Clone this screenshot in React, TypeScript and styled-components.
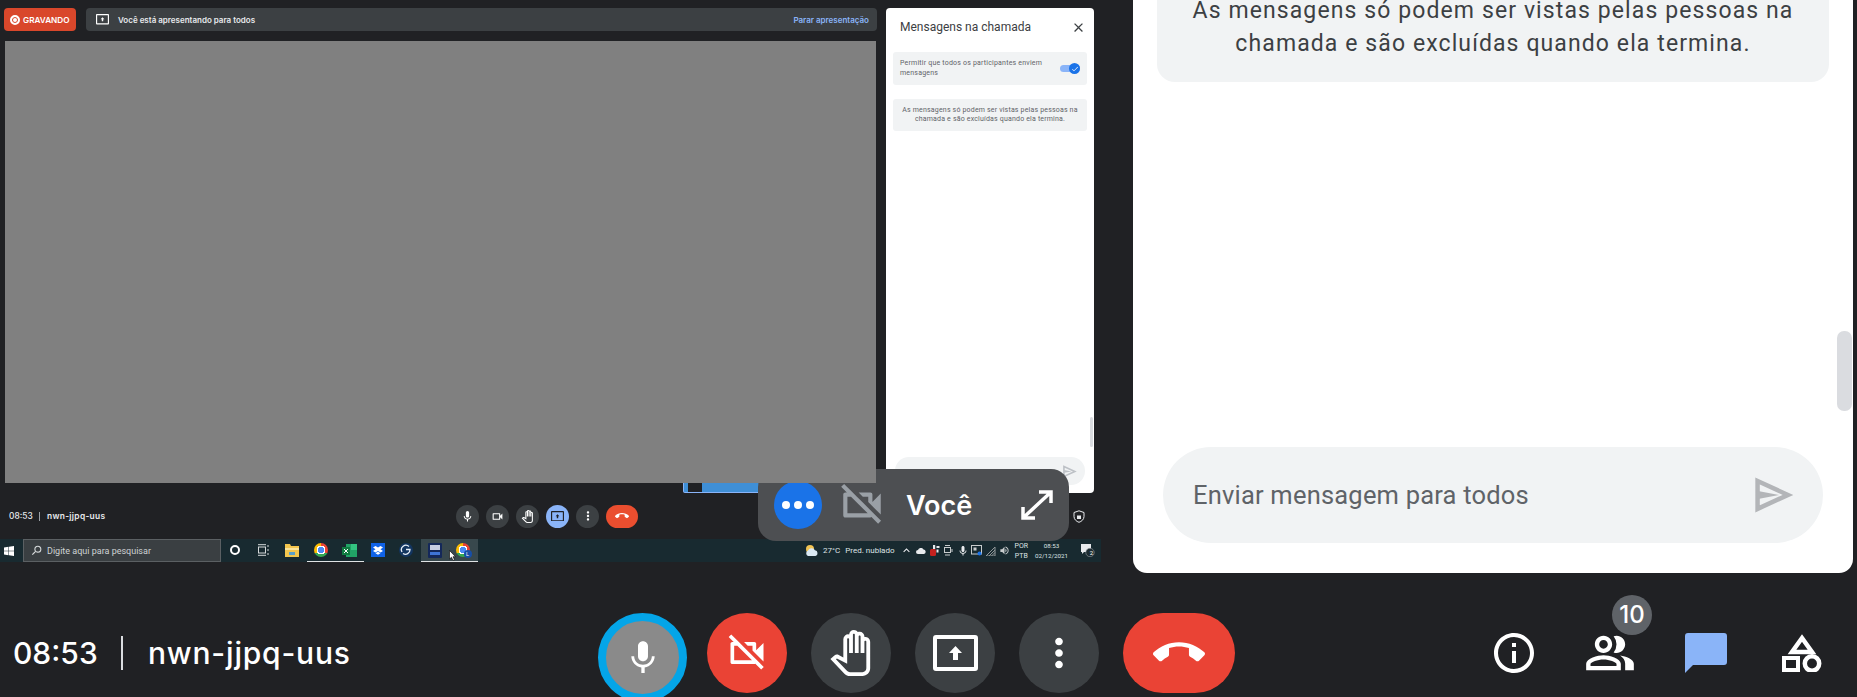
import styled, { createGlobalStyle } from "styled-components"
import {
    MdCallEnd,
    MdCheck,
    MdClose,
    MdInfoOutline,
    MdKeyboardArrowUp,
    MdMic,
    MdMoreVert,
    MdOutlinePanTool,
    MdOutlinePeopleAlt,
    MdOutlineVideocam,
    MdOutlineVideocamOff,
    MdSearch,
    MdVolumeUp,
} from "react-icons/md"

const GlobalStyle = createGlobalStyle`
    html, body {
        margin: 0;
        padding: 0;
        background: #202124;
    }
    * {
        box-sizing: border-box;
    }
`

const PresentIcon = ({ size, color }: { size: number; color: string }) => (
    <svg width={size} height={size * 0.8} viewBox="0 0 45 36">
        <rect x="2" y="2" width="41" height="32" rx="1" fill="none" stroke={color} strokeWidth="4" />
        <path d="M22.5 11 L29 18 H25 V25 H20 V18 H16 Z" fill={color} />
    </svg>
)

const SendIcon = ({ size, color }: { size: number; color: string }) => (
    <svg width={size} height={size * 0.92} viewBox="0 0 39 36">
        <path d="M2.5 4 L33 18 L2.5 32 Z" fill="none" stroke={color} strokeWidth="4.5" />
        <path d="M3 14 L24 18 L3 22 Z" fill={color} />
    </svg>
)

const ShapesIcon = () => (
    <svg width="40" height="38" viewBox="0 0 40 38">
        <path d="M20 4 L30 18 H10 Z" fill="none" stroke="#fff" strokeWidth="4.5" />
        <rect x="2" y="24" width="14" height="12" fill="none" stroke="#fff" strokeWidth="4" />
        <circle cx="30" cy="29.5" r="7.2" fill="none" stroke="#fff" strokeWidth="4.5" />
    </svg>
)

const ChatIcon = () => (
    <svg width="42" height="40" viewBox="0 0 42 40">
        <path d="M3 0 H39 a3 3 0 0 1 3 3 V29 a3 3 0 0 1 -3 3 H8 L0 40 V3 a3 3 0 0 1 3 -3 Z" fill="#8ab4f8" />
    </svg>
)

const ExpandIcon = () => (
    <svg width="32" height="30" viewBox="0 0 32 30">
        <path
            d="M18 2 H30 V13 M30 2 L2 28 M2 17 V28 H14"
            fill="none"
            stroke="#fff"
            strokeWidth="3.5"
        />
    </svg>
)

const WindowsIcon = () => (
    <svg width="10" height="10" viewBox="0 0 10 10">
        <path d="M0 1.4 L4.5 .8 V4.7 H0 Z M5 .7 L10 0 V4.7 H5 Z M0 5.2 H4.5 V9.2 L0 8.6 Z M5 5.2 H10 V10 L5 9.3 Z" fill="#fff" />
    </svg>
)

const TaskViewIcon = () => (
    <svg width="11" height="12" viewBox="0 0 11 12">
        <rect x=".5" y="3" width="7" height="6" fill="none" stroke="#d5d9da" />
        <path d="M0 .7 H8 M0 11.3 H8 M10 1 V3 M10 5 V7 M10 9 V11" stroke="#d5d9da" />
    </svg>
)

const FolderIcon = () => (
    <svg width="14" height="13" viewBox="0 0 14 13">
        <path d="M0 0 H5 L6 2 H14 V13 H0 Z" fill="#f3c64e" />
        <rect x="0" y="4" width="14" height="2" fill="#fbe49a" />
        <rect x="4" y="8" width="6" height="3" fill="#5ca0c8" />
    </svg>
)

const ExcelIcon = () => (
    <svg width="15" height="13" viewBox="0 0 15 13">
        <rect x="4" y="0" width="11" height="13" fill="#21a366" />
        <rect x="9" y="0" width="6" height="6" fill="#33c481" />
        <rect x="0" y="3" width="8" height="8" fill="#107c41" />
        <path d="M2 5 L6 9 M6 5 L2 9" stroke="#fff" strokeWidth="1" />
    </svg>
)

const DropboxIcon = () => (
    <svg width="14" height="14" viewBox="0 0 14 14">
        <rect width="14" height="14" fill="#0f62e6" />
        <path d="M4.5 3 L7 4.6 L9.5 3 L12 4.6 L9.5 6.3 L12 8 L9.5 9.5 L7 8 L4.5 9.5 L2 8 L4.5 6.3 L2 4.6 Z M4.5 10.2 L7 8.7 L9.5 10.2 L7 11.8 Z" fill="#fff" />
    </svg>
)

const SyncIcon = () => (
    <svg width="14" height="14" viewBox="0 0 14 14">
        <circle cx="7" cy="7" r="7" fill="#12355f" />
        <path d="M10 3.5 A4.5 4.5 0 0 0 3 9 M4 10.5 A4.5 4.5 0 0 0 11 6.5 H7" fill="none" stroke="#e6edf5" strokeWidth="1.3" />
    </svg>
)

const DtvIcon = () => (
    <svg width="14" height="15" viewBox="0 0 14 15">
        <rect width="14" height="15" rx="1" fill="#14285a" />
        <rect x="2" y="2" width="10" height="5" fill="#c6cde2" />
        <rect x="2" y="9" width="10" height="3" fill="#3f74d6" />
    </svg>
)

const CloudIcon = () => (
    <svg width="13" height="11" viewBox="0 0 13 11">
        <circle cx="5" cy="4" r="4" fill="#f2c453" />
        <path d="M3 11 a3 3 0 0 1 0 -5.5 a4 4 0 0 1 7 -.3 a3 3 0 0 1 .5 5.8 Z" fill="#dbe9f3" />
    </svg>
)

const ShieldIcon = () => (
    <svg width="12" height="13" viewBox="0 0 12 13">
        <path d="M6 .8 L11 2.5 V6.5 C11 9.5 8.5 11.5 6 12.3 C3.5 11.5 1 9.5 1 6.5 V2.5 Z" fill="none" stroke="#e8eaed" />
        <rect x="4" y="5.5" width="4" height="3.5" fill="#e8eaed" />
    </svg>
)

const CursorIcon = () => (
    <svg width="7" height="11" viewBox="0 0 7 11">
        <path d="M.5 .5 V9 L2.5 7.2 L4 10.5 L5.5 9.8 L4 6.7 H6.5 Z" fill="#fff" stroke="#000" strokeWidth=".6" />
    </svg>
)

const TrayCloud = () => (
    <svg width="10" height="6" viewBox="0 0 10 6">
        <path d="M2 6 a2 2 0 0 1 0 -4 a3 3 0 0 1 5.5 -.5 a2.3 2.3 0 0 1 .5 4.5 Z" fill="#e8eaed" />
    </svg>
)

const TrayApps = () => (
    <svg width="10" height="11" viewBox="0 0 10 11">
        <rect x="3" y="0" width="2.2" height="4" fill="#e8eaed" />
        <rect x="6.5" y="1" width="3" height="2" fill="#e8eaed" />
        <rect x="0" y="4" width="6" height="7" rx="1.5" fill="#c5221f" />
        <rect x="6.5" y="4.5" width="2" height="3" fill="#e8eaed" />
    </svg>
)

const TrayMeet = () => (
    <svg width="9" height="11" viewBox="0 0 9 11">
        <rect x=".5" y="2.5" width="6" height="5" fill="none" stroke="#c8cccd" />
        <path d="M1 .5 H6 M1 10 H6 M8 4 V7" stroke="#c8cccd" />
    </svg>
)

const TrayScreen = () => (
    <svg width="11" height="11" viewBox="0 0 11 11">
        <rect x=".5" y=".5" width="10" height="8.5" fill="none" stroke="#c8cccd" />
        <rect x="2.5" y="2.5" width="3" height="3" fill="#c8cccd" />
        <circle cx="8.5" cy="8.5" r="2" fill="#1a73e8" />
    </svg>
)

const TrayWifi = () => (
    <svg width="10" height="10" viewBox="0 0 10 10">
        <path d="M0 10 L9 1 V10 Z" fill="none" stroke="#8f9597" />
        <path d="M3 10 L9 4 M5.5 10 L9 6.5" stroke="#8f9597" />
    </svg>
)

const NotifIcon = () => (
    <svg width="14" height="13" viewBox="0 0 14 13">
        <path d="M0 0 H10 V8 H3 L1 10 V8 H0 Z" fill="#e8eaed" />
        <circle cx="9" cy="8.5" r="4.2" fill="#1d2b30" stroke="#9aa0a6" strokeWidth=".6" />
    </svg>
)

function App() {
    return (
        <>
            <GlobalStyle />
            <Page>
                <Main>
                    <ShareArea>
                        <SharedTop>
                            <Stage>
                                <InfoRow>
                                    <RecordPill>
                                        <RecordDot />
                                        GRAVANDO
                                    </RecordPill>
                                    <PresentBar>
                                        <PresentIcon size={13} color="#fff" />
                                        <PresentText>Você está apresentando para todos</PresentText>
                                        <StopLink>Parar apresentação</StopLink>
                                    </PresentBar>
                                </InfoRow>
                                <SharedScreen />
                                <Thumb>
                                    <ThumbDark />
                                </Thumb>
                            </Stage>
                            <MiniChat>
                                <MiniHeader>
                                    <MiniTitle>Mensagens na chamada</MiniTitle>
                                    <MdClose size={15} color="#3c4043" />
                                </MiniHeader>
                                <MiniRow>
                                    <MiniRowText>Permitir que todos os participantes enviem mensagens</MiniRowText>
                                    <Toggle>
                                        <ToggleKnob>
                                            <MdCheck size={8} color="#fff" />
                                        </ToggleKnob>
                                    </Toggle>
                                </MiniRow>
                                <MiniNotice>
                                    As mensagens só podem ser vistas pelas pessoas na chamada e são excluídas quando ela termina.
                                </MiniNotice>
                                <MiniInput>
                                    <MiniHint>Enviar mensagem</MiniHint>
                                    <SendIcon size={14} color="#bdc1c6" />
                                </MiniInput>
                                <MiniScroll />
                            </MiniChat>
                        </SharedTop>

                        <MiniControls>
                            <MiniClock>08:53</MiniClock>
                            <MiniDivider />
                            <MiniCode>nwn-jjpq-uus</MiniCode>
                            <MiniButtons>
                                <MiniButton>
                                    <MdMic size={13} color="#fff" />
                                </MiniButton>
                                <MiniButton>
                                    <MdOutlineVideocam size={13} color="#fff" />
                                </MiniButton>
                                <MiniButton>
                                    <MdOutlinePanTool size={13} color="#fff" />
                                </MiniButton>
                                <MiniButton $bg="#8ab4f8">
                                    <PresentIcon size={13} color="#202124" />
                                </MiniButton>
                                <MiniButton>
                                    <MdMoreVert size={14} color="#fff" />
                                </MiniButton>
                                <MiniHangup>
                                    <MdCallEnd size={14} color="#fff" />
                                </MiniHangup>
                            </MiniButtons>
                            <ShieldSlot>
                                <ShieldIcon />
                            </ShieldSlot>
                        </MiniControls>

                        <Taskbar>
                            <StartSlot>
                                <WindowsIcon />
                            </StartSlot>
                            <SearchBox>
                                <SearchGlyph>
                                    <MdSearch size={13} color="#d5d9da" />
                                </SearchGlyph>
                                Digite aqui para pesquisar
                            </SearchBox>
                            <TaskSlot>
                                <CortanaRing />
                            </TaskSlot>
                            <TaskSlot>
                                <TaskViewIcon />
                            </TaskSlot>
                            <TaskSlot>
                                <FolderIcon />
                            </TaskSlot>
                            <TaskSlot $open>
                                <ChromeBall />
                            </TaskSlot>
                            <TaskSlot $open>
                                <ExcelIcon />
                            </TaskSlot>
                            <TaskSlot>
                                <DropboxIcon />
                            </TaskSlot>
                            <TaskSlot>
                                <SyncIcon />
                            </TaskSlot>
                            <TaskSlot $open $active>
                                <DtvIcon />
                            </TaskSlot>
                            <TaskSlot $open $active>
                                <ChromeBall />
                                <ProfileDot>L</ProfileDot>
                                <CursorSpot>
                                    <CursorIcon />
                                </CursorSpot>
                            </TaskSlot>
                            <Tray>
                                <CloudIcon />
                                <Weather>27°C</Weather>
                                <Weather>Pred. nublado</Weather>
                                <TrayIcons>
                                    <TrayIcon>
                                        <MdKeyboardArrowUp size={13} color="#e8eaed" />
                                    </TrayIcon>
                                    <TrayIcon>
                                        <TrayCloud />
                                    </TrayIcon>
                                    <TrayIcon>
                                        <TrayApps />
                                    </TrayIcon>
                                    <TrayIcon>
                                        <TrayMeet />
                                    </TrayIcon>
                                    <TrayIcon>
                                        <MdMic size={12} color="#e8eaed" />
                                    </TrayIcon>
                                    <TrayIcon>
                                        <TrayScreen />
                                    </TrayIcon>
                                    <TrayIcon>
                                        <TrayWifi />
                                    </TrayIcon>
                                    <TrayIcon>
                                        <MdVolumeUp size={11} color="#c8cccd" />
                                    </TrayIcon>
                                </TrayIcons>
                                <Lang>
                                    <span>POR</span>
                                    <span>PTB</span>
                                </Lang>
                                <Clock>
                                    <span>08:53</span>
                                    <span>02/12/2021</span>
                                </Clock>
                                <NotifSlot>
                                    <NotifIcon />
                                    <NotifCount>2</NotifCount>
                                </NotifSlot>
                            </Tray>
                        </Taskbar>

                        <SelfPill>
                            <MoreBubble>
                                <BubbleDot />
                                <BubbleDot />
                                <BubbleDot />
                            </MoreBubble>
                            <MdOutlineVideocamOff size={50} color="#9aa0a6" />
                            <SelfName>Você</SelfName>
                            <ExpandIcon />
                        </SelfPill>
                    </ShareArea>

                    <ChatPanel>
                        <Notice>
                            <NoticeText>
                                As mensagens só podem ser vistas pelas pessoas na chamada e são excluídas quando ela termina.
                            </NoticeText>
                        </Notice>
                        <Scrollbar />
                        <MessageInput>
                            <InputHint>Enviar mensagem para todos</InputHint>
                            <SendIcon size={39} color="#b3b5b8" />
                        </MessageInput>
                    </ChatPanel>
                </Main>

                <BottomBar>
                    <MeetingInfo>
                        <BigClock>08:53</BigClock>
                        <BigDivider />
                        <BigCode>nwn-jjpq-uus</BigCode>
                    </MeetingInfo>
                    <Controls>
                        <MicButton>
                            <MdMic size={40} color="#fff" />
                        </MicButton>
                        <RoundButton $bg="#ea4335">
                            <MdOutlineVideocamOff size={44} color="#fff" />
                        </RoundButton>
                        <RoundButton>
                            <MdOutlinePanTool size={46} color="#fff" />
                        </RoundButton>
                        <RoundButton>
                            <PresentIcon size={45} color="#fff" />
                        </RoundButton>
                        <RoundButton>
                            <MdMoreVert size={46} color="#fff" />
                        </RoundButton>
                        <HangupButton>
                            <MdCallEnd size={52} color="#fff" />
                        </HangupButton>
                    </Controls>
                    <Tools>
                        <ToolSlot>
                            <MdInfoOutline size={48} color="#fff" />
                        </ToolSlot>
                        <ToolSlot>
                            <MdOutlinePeopleAlt size={52} color="#fff" />
                            <CountBadge>10</CountBadge>
                        </ToolSlot>
                        <ToolSlot>
                            <ChatIcon />
                        </ToolSlot>
                        <ToolSlot>
                            <ShapesIcon />
                        </ToolSlot>
                    </Tools>
                </BottomBar>
            </Page>
        </>
    )
}

export default App

const Page = styled.div`
    width: 1857px;
    height: 697px;
    background: #202124;
    overflow: hidden;
    display: flex;
    flex-direction: column;
    font-family: Inter, "Liberation Sans", sans-serif;
`

const Main = styled.div`
    height: 573px;
    display: flex;
`

const ShareArea = styled.div`
    position: relative;
    width: 1133px;
    flex-shrink: 0;
    display: flex;
    flex-direction: column;
`

const SharedTop = styled.div`
    height: 493px;
    padding: 8px 0 0 4px;
    display: flex;
    gap: 9px;
`

const Stage = styled.div`
    width: 873px;
    display: flex;
    flex-direction: column;
`

const InfoRow = styled.div`
    height: 23px;
    display: flex;
    gap: 10px;
`

const RecordPill = styled.div`
    width: 72px;
    padding-left: 6px;
    display: flex;
    align-items: center;
    gap: 3px;
    background: #d9472b;
    border-radius: 4px;
    color: #fff;
    font-size: 8.2px;
    font-weight: 600;
    white-space: nowrap;
`

const RecordDot = styled.span`
    width: 10px;
    height: 10px;
    flex-shrink: 0;
    border-radius: 50%;
    background: #fff;
    border: 2px solid #fff;
    box-shadow: inset 0 0 0 1px #d9472b;
`

const PresentBar = styled.div`
    flex: 1;
    padding: 0 8px 0 10px;
    display: flex;
    align-items: center;
    background: #3c4043;
    border-radius: 4px;
`

const PresentText = styled.span`
    margin-left: 9px;
    color: #e8eaed;
    font-size: 8px;
    font-weight: 600;
    white-space: nowrap;
`

const StopLink = styled.span`
    margin-left: auto;
    color: #8ab4f8;
    font-size: 8px;
    font-weight: 600;
    white-space: nowrap;
`

const SharedScreen = styled.div`
    position: relative;
    z-index: 2;
    width: 871px;
    height: 442px;
    margin: 10px 0 0 1px;
    background: #808080;
`

const Thumb = styled.div`
    width: 90px;
    height: 10px;
    margin-left: 679px;
    padding-left: 4px;
    background: #3f8fd6;
    border: 1px solid #8ab4f8;
    border-top: none;
    border-radius: 0 0 2px 2px;
`

const ThumbDark = styled.div`
    width: 14px;
    height: 100%;
    background: #202124;
`

const MiniChat = styled.div`
    position: relative;
    width: 208px;
    height: 485px;
    background: #fff;
    border-radius: 4px;
    padding: 0 7px;
    display: flex;
    flex-direction: column;
    font-family: Roboto, sans-serif;
`

const MiniHeader = styled.div`
    height: 38px;
    padding: 0 1px 0 7px;
    display: flex;
    align-items: center;
    justify-content: space-between;
    flex-shrink: 0;
`

const MiniTitle = styled.span`
    color: #3c4043;
    font-size: 12px;
`

const MiniRow = styled.div`
    height: 33px;
    margin-top: 6px;
    padding: 0 7px;
    display: flex;
    align-items: center;
    justify-content: space-between;
    background: #f1f3f4;
    border-radius: 3px;
`

const MiniRowText = styled.span`
    width: 158px;
    color: #5f6368;
    font-size: 7px;
    line-height: 9.6px;
    letter-spacing: 0.2px;
`

const Toggle = styled.div`
    position: relative;
    width: 20px;
    height: 7px;
    border-radius: 4px;
    background: #8ab4f8;
`

const ToggleKnob = styled.div`
    position: absolute;
    right: 0;
    top: -2px;
    width: 11px;
    height: 11px;
    border-radius: 50%;
    background: #1a73e8;
    display: flex;
    align-items: center;
    justify-content: center;
`

const MiniNotice = styled.div`
    height: 32px;
    margin-top: 14px;
    padding: 0 2px;
    display: flex;
    align-items: center;
    text-align: center;
    background: #f1f3f4;
    border-radius: 3px;
    color: #5f6368;
    font-size: 7px;
    line-height: 9.5px;
    letter-spacing: 0.18px;
`

const MiniInput = styled.div`
    height: 28px;
    margin: auto 2px 8px 2px;
    padding: 0 8px 0 8px;
    display: flex;
    align-items: center;
    justify-content: space-between;
    background: #f1f3f4;
    border-radius: 14px;
`

const MiniHint = styled.span`
    color: #80868b;
    font-size: 8px;
`

const MiniScroll = styled.div`
    position: absolute;
    right: 1px;
    top: 409px;
    width: 3px;
    height: 30px;
    border-radius: 2px;
    background: #dadce0;
`

const MiniControls = styled.div`
    height: 46px;
    padding: 0 0 0 9px;
    display: flex;
    align-items: center;
    color: #e8eaed;
    font-size: 8.4px;
    font-weight: 500;
`

const MiniClock = styled.span`
    width: 25px;
`

const MiniDivider = styled.span`
    width: 1px;
    height: 9px;
    margin: 0 7px 0 5px;
    background: #9aa0a6;
`

const MiniCode = styled.span`
    width: 409px;
    font-weight: 600;
    letter-spacing: 0.3px;
`

const MiniButtons = styled.div`
    display: flex;
    align-items: center;
    gap: 7px;
`

const MiniButton = styled.div<{ $bg?: string }>`
    width: 23px;
    height: 23px;
    border-radius: 50%;
    background: ${(p) => p.$bg || "#3c4043"};
    display: flex;
    align-items: center;
    justify-content: center;
`

const MiniHangup = styled(MiniButton)`
    width: 32px;
    border-radius: 12px;
    background: #ea4e2f;
`

const ShieldSlot = styled.div`
    margin-left: 435px;
    display: flex;
`

const Taskbar = styled.div`
    width: 1101px;
    height: 23px;
    display: flex;
    align-items: stretch;
    background: #182a30;
    font-family: Roboto, sans-serif;
`

const StartSlot = styled.div`
    width: 23px;
    padding-left: 4px;
    display: flex;
    align-items: center;
`

const SearchBox = styled.div`
    width: 198px;
    padding-left: 6px;
    display: flex;
    align-items: center;
    gap: 4px;
    background: #3a3f42;
    border: 1px solid #5b6063;
    color: #cfd3d4;
    font-size: 9px;
`

const SearchGlyph = styled.span`
    display: flex;
    transform: scaleX(-1);
`

const TaskSlot = styled.div<{ $open?: boolean; $active?: boolean }>`
    position: relative;
    width: 28.5px;
    display: flex;
    align-items: center;
    justify-content: center;
    background: ${(p) => (p.$active ? "rgba(255,255,255,.14)" : "transparent")};
    border-bottom: 1px solid ${(p) => (p.$open ? "#dfe3e5" : "transparent")};
`

const CortanaRing = styled.span`
    width: 10px;
    height: 10px;
    border-radius: 50%;
    border: 2px solid #fff;
`

const ChromeBall = styled.span`
    width: 14px;
    height: 14px;
    border-radius: 50%;
    background:
        radial-gradient(circle, #4a8af4 0 3px, #fff 3px 4.5px, transparent 4.5px),
        conic-gradient(#ea4335 0 120deg, #34a853 120deg 240deg, #fbbc05 240deg);
`

const ProfileDot = styled.span`
    position: absolute;
    right: 6px;
    bottom: 3px;
    width: 8px;
    height: 8px;
    border-radius: 50%;
    background: #174ea6;
    color: #fff;
    font-size: 5.5px;
    line-height: 8px;
    text-align: center;
`

const CursorSpot = styled.span`
    position: absolute;
    left: 0;
    bottom: 0;
    display: flex;
`

const Tray = styled.div`
    margin-left: auto;
    padding-right: 6px;
    display: flex;
    align-items: center;
    gap: 5px;
    color: #dfe3e5;
    font-size: 8px;
`

const Weather = styled.span`
    white-space: nowrap;
`

const TrayIcons = styled.div`
    display: flex;
    align-items: center;
`

const TrayIcon = styled.span`
    width: 14px;
    display: flex;
    align-items: center;
    justify-content: center;
`

const Lang = styled.div`
    margin-left: -2px;
    display: flex;
    flex-direction: column;
    align-items: center;
    font-size: 7px;
    line-height: 10px;
`

const Clock = styled(Lang)`
    margin-left: 2px;
    font-size: 6.2px;
`

const NotifSlot = styled.div`
    position: relative;
    margin-left: 8px;
    display: flex;
`

const NotifCount = styled.span`
    position: absolute;
    right: 2px;
    bottom: 1px;
    color: #fff;
    font-size: 6px;
    line-height: 7px;
`

const SelfPill = styled.div`
    position: absolute;
    z-index: 1;
    left: 758px;
    top: 469px;
    width: 311px;
    height: 72px;
    padding-left: 16px;
    display: flex;
    align-items: center;
    background: #4d4f52;
    border-radius: 18px;
`

const MoreBubble = styled.div`
    width: 48px;
    height: 48px;
    margin-right: 15px;
    flex-shrink: 0;
    display: flex;
    align-items: center;
    justify-content: center;
    gap: 4px;
    background: #1a73e8;
    border-radius: 50%;
`

const BubbleDot = styled.span`
    width: 8px;
    height: 8px;
    border-radius: 50%;
    background: #fff;
`

const SelfName = styled.span`
    width: 115px;
    margin-left: 19px;
    color: #fff;
    font-size: 27px;
    font-weight: 600;
`

const ChatPanel = styled.div`
    position: relative;
    width: 720px;
    background: #fff;
    border-radius: 0 0 14px 14px;
    display: flex;
    flex-direction: column;
    font-family: Roboto, sans-serif;
`

const Notice = styled.div`
    width: 672px;
    height: 82px;
    margin-left: 24px;
    padding-bottom: 22px;
    display: flex;
    align-items: flex-end;
    justify-content: center;
    background: #f1f3f4;
    border-radius: 0 0 18px 18px;
`

const NoticeText = styled.p`
    width: 640px;
    margin: 0;
    text-align: center;
    color: #3c4043;
    font-size: 23px;
    line-height: 33px;
    letter-spacing: 1.1px;
`

const Scrollbar = styled.div`
    position: absolute;
    right: 1px;
    top: 331px;
    width: 15px;
    height: 80px;
    border-radius: 7px;
    background: #dadce0;
`

const MessageInput = styled.div`
    width: 660px;
    height: 96px;
    margin: auto 0 30px 30px;
    padding: 0 29px 0 30px;
    display: flex;
    align-items: center;
    justify-content: space-between;
    background: #f1f3f4;
    border-radius: 48px;
`

const InputHint = styled.span`
    color: #5f6368;
    font-size: 25.5px;
    letter-spacing: 0.2px;
`

const BottomBar = styled.div`
    height: 124px;
    padding-top: 40px;
    display: flex;
    align-items: flex-start;
`

const MeetingInfo = styled.div`
    width: 598px;
    height: 80px;
    padding-left: 13px;
    display: flex;
    align-items: center;
    color: #fff;
    font-size: 30px;
    font-weight: 500;
`

const BigClock = styled.span`
    width: 108px;
`

const BigDivider = styled.span`
    width: 2px;
    height: 34px;
    margin-right: 25px;
    background: #dadce0;
`

const BigCode = styled.span`
    white-space: nowrap;
    letter-spacing: 0.8px;
`

const Controls = styled.div`
    display: flex;
    gap: 24px;
`

const RoundButton = styled.div<{ $bg?: string }>`
    width: 80px;
    height: 80px;
    border-radius: 50%;
    background: ${(p) => p.$bg || "#3c4043"};
    display: flex;
    align-items: center;
    justify-content: center;
`

const MicButton = styled(RoundButton)`
    width: 89px;
    height: 89px;
    margin-right: -4px;
    background: #8a8a8a;
    border: 8px solid #04a5e8;
`

const HangupButton = styled(RoundButton)`
    width: 112px;
    border-radius: 40px;
    background: #ea4335;
`

const Tools = styled.div`
    margin-left: auto;
    padding-right: 7px;
    display: flex;
`

const ToolSlot = styled.div`
    position: relative;
    width: 96px;
    height: 80px;
    display: flex;
    align-items: center;
    justify-content: center;
`

const CountBadge = styled.span`
    position: absolute;
    left: 50px;
    top: -18px;
    width: 40px;
    height: 40px;
    border-radius: 50%;
    background: #5f6368;
    color: #fff;
    font-size: 24px;
    font-weight: 500;
    line-height: 40px;
    text-align: center;
`
